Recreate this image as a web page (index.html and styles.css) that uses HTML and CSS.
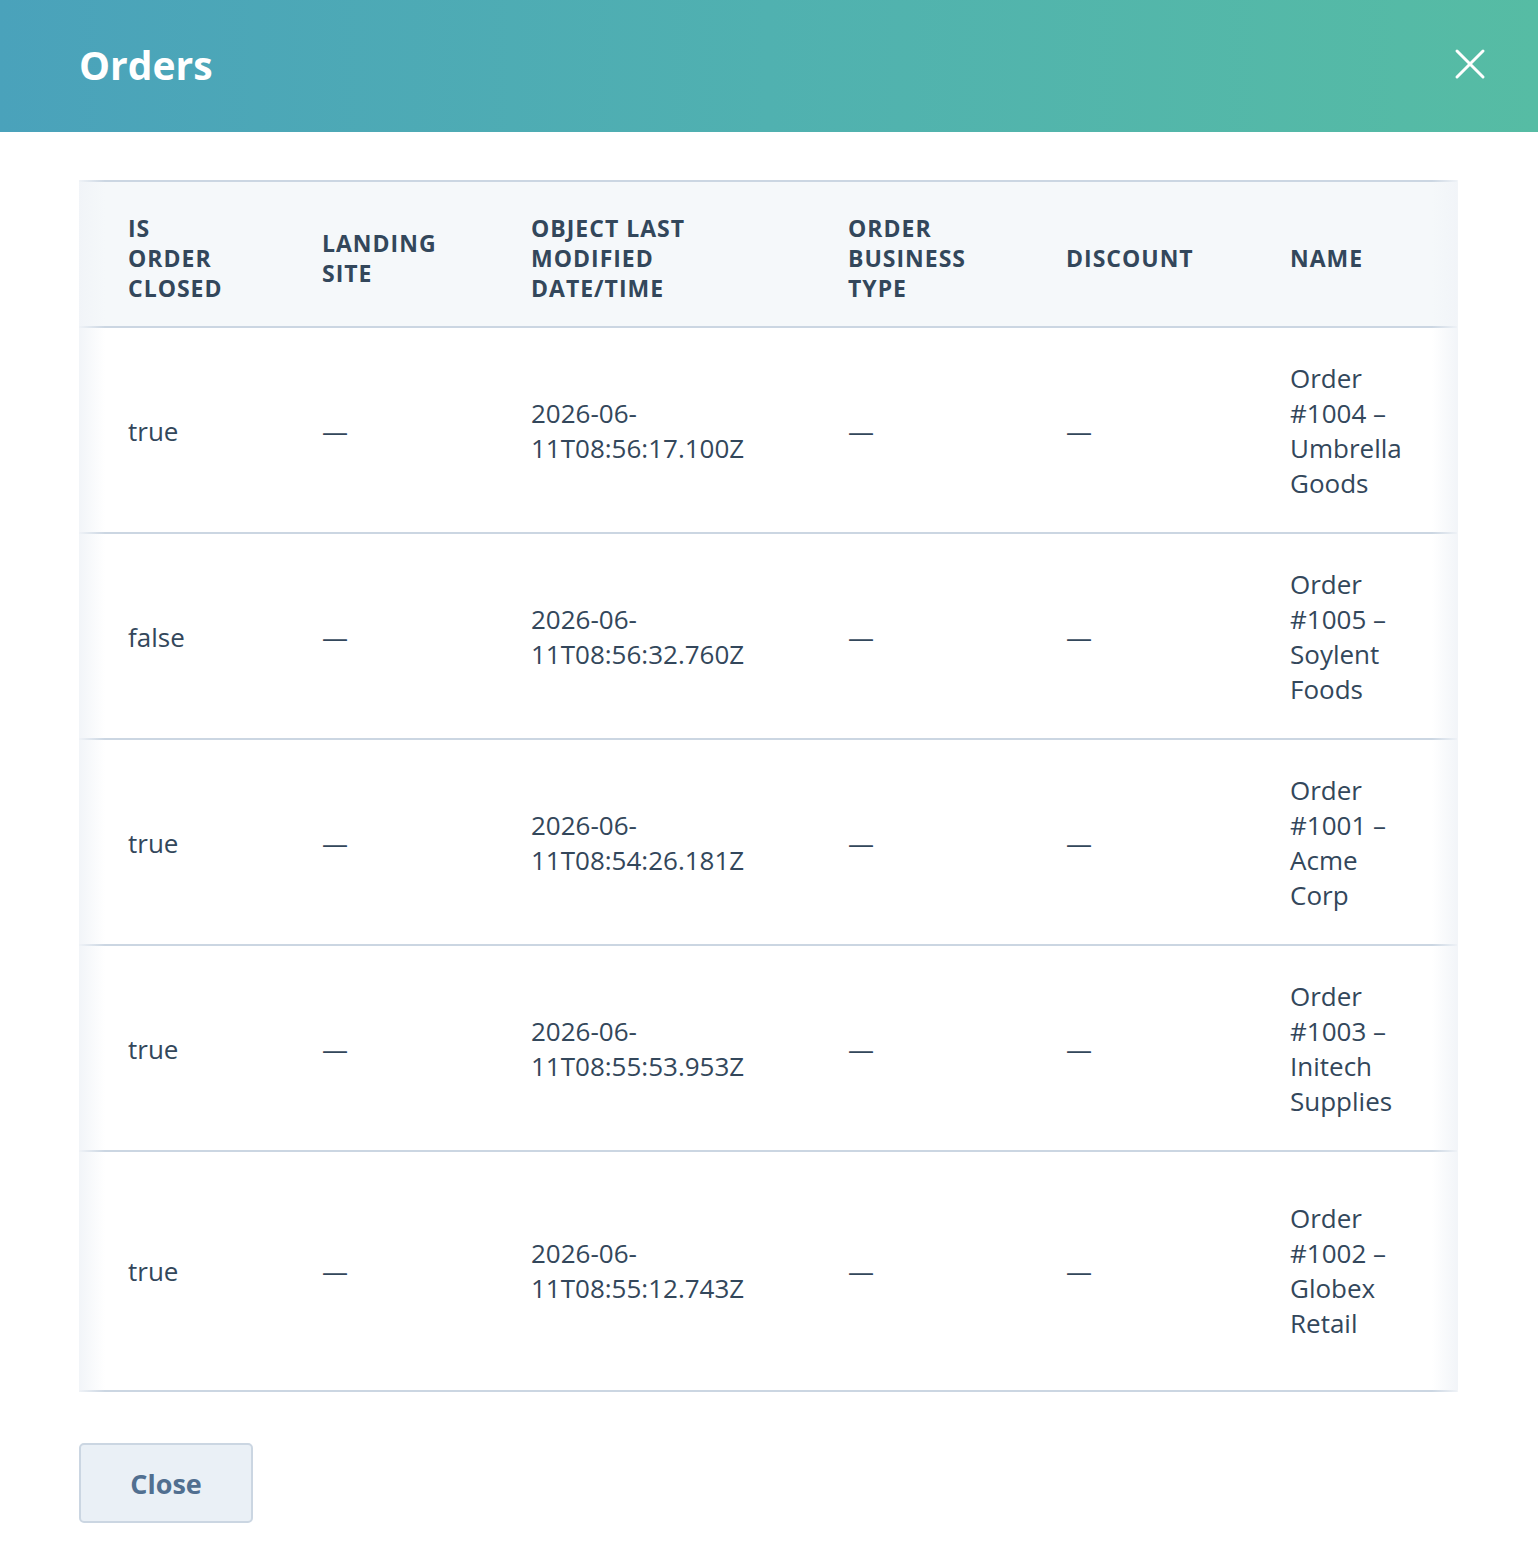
FILE: index.html
```html
<!DOCTYPE html>
<html lang="en">
<head>
  <meta charset="UTF-8">
  <meta name="viewport" content="width=device-width, initial-scale=1.0">
  <title>Orders</title>
  <link rel="stylesheet" href="styles.css">
</head>
<body>
  <div class="modal-header">
    <h1>Orders</h1>
    <button class="close-icon" aria-label="Close">
      <svg width="32" height="32" viewBox="0 0 32 32">
        <line x1="3" y1="3" x2="29" y2="29" />
        <line x1="29" y1="3" x2="3" y2="29" />
      </svg>
    </button>
  </div>

  <div class="modal-body">
    <div class="table-wrap">
      <table class="orders">
        <colgroup>
          <col class="c1"><col class="c2"><col class="c3"><col class="c4"><col class="c5"><col class="c6">
        </colgroup>
        <thead>
          <tr>
            <th>Is order closed</th>
            <th>Landing site</th>
            <th>Object last modified date/time</th>
            <th>Order business type</th>
            <th>Discount</th>
            <th>Name</th>
          </tr>
        </thead>
        <tbody>
          <tr>
            <td>true</td>
            <td>—</td>
            <td>2026-06-<wbr>11T08:56:17.100Z</td>
            <td>—</td>
            <td>—</td>
            <td>Order #1004 – Umbrella Goods</td>
          </tr>
          <tr>
            <td>false</td>
            <td>—</td>
            <td>2026-06-<wbr>11T08:56:32.760Z</td>
            <td>—</td>
            <td>—</td>
            <td>Order #1005 – Soylent Foods</td>
          </tr>
          <tr>
            <td>true</td>
            <td>—</td>
            <td>2026-06-<wbr>11T08:54:26.181Z</td>
            <td>—</td>
            <td>—</td>
            <td>Order #1001 – Acme Corp</td>
          </tr>
          <tr>
            <td>true</td>
            <td>—</td>
            <td>2026-06-<wbr>11T08:55:53.953Z</td>
            <td>—</td>
            <td>—</td>
            <td>Order #1003 – Initech Supplies</td>
          </tr>
          <tr>
            <td>true</td>
            <td>—</td>
            <td>2026-06-<wbr>11T08:55:12.743Z</td>
            <td>—</td>
            <td>—</td>
            <td>Order #1002 – Globex Retail</td>
          </tr>
        </tbody>
      </table>
      <div class="scroll-shadow left"></div>
      <div class="scroll-shadow right"></div>
    </div>

    <button class="close-btn">Close</button>
  </div>
</body>
</html>
```

FILE: styles.css
```css
body {
  margin: 0;
  padding: 0;
  background: #fff;
  color: #33475b;
  font-family: 'Open Sans', 'Liberation Sans', sans-serif;
}
.modal-header {
  display: flex;
  justify-content: space-between;
  align-items: center;
  height: 132px;
  padding: 0 52px 0 79px;
  background: linear-gradient(90deg, #4aa2bb 0%, #50b1b0 50%, #56bca4 100%);
}
.modal-header h1 {
  margin: 0 0 4px 0;
  color: #fff;
  font-size: 39px;
  font-weight: 700;
}
.close-icon {
  background: none;
  border: none;
  padding: 0;
  width: 32px;
  height: 32px;
  margin-bottom: 4px;
  cursor: pointer;
}
.close-icon svg {
  display: block;
}
.close-icon line {
  stroke: #fff;
  stroke-width: 3;
  stroke-linecap: round;
}
.modal-body {
  padding: 48px 80px 43px 79px;
}
.table-wrap {
  position: relative;
}
.orders {
  width: 1378px;
  table-layout: fixed;
  border-collapse: separate;
  border-spacing: 0;
}
.orders col.c1 { width: 219px; }
.orders col.c2 { width: 209px; }
.orders col.c3 { width: 317px; }
.orders col.c4 { width: 218px; }
.orders col.c5 { width: 224px; }
.orders col.c6 { width: 191px; }
.orders th,
.orders td {
  text-align: left;
  vertical-align: middle;
  padding-left: 24px;
  border-bottom: 2px solid #cbd6e2;
}
.orders th:nth-child(1), .orders td:nth-child(1) { padding-left: 49px; padding-right: 66px; }
.orders th:nth-child(2), .orders td:nth-child(2) { padding-right: 45px; }
.orders th:nth-child(3), .orders td:nth-child(3) { padding-right: 53px; }
.orders th:nth-child(4), .orders td:nth-child(4) { padding-right: 44px; }
.orders th:nth-child(5), .orders td:nth-child(5) { padding-right: 50px; }
.orders th:nth-child(6), .orders td:nth-child(6) { padding-right: 45px; }
.orders th {
  background: #f5f8fa;
  border-top: 2px solid #cbd6e2;
  padding-top: 31px;
  padding-bottom: 23px;
  font-size: 23px;
  line-height: 30px;
  font-weight: 700;
  text-transform: uppercase;
  letter-spacing: 1px;
}
.orders td {
  padding-top: 33px;
  padding-bottom: 31px;
  font-size: 26px;
  line-height: 35px;
}
.orders tbody tr:last-child td {
  padding-top: 49px;
  padding-bottom: 49px;
}
.scroll-shadow {
  position: absolute;
  top: 0;
  bottom: 0;
  width: 26px;
  pointer-events: none;
}
.scroll-shadow.left {
  left: 0;
  background: linear-gradient(90deg, rgba(241, 244, 248, 0.95), rgba(245, 248, 250, 0));
}
.scroll-shadow.right {
  right: 0;
  background: linear-gradient(270deg, rgba(241, 244, 248, 0.95), rgba(245, 248, 250, 0));
}
.close-btn {
  margin-top: 51px;
  width: 174px;
  height: 80px;
  background: #eaf0f6;
  border: 2px solid #cbd6e2;
  border-radius: 5px;
  color: #516f90;
  font-family: 'Open Sans', 'Liberation Sans', sans-serif;
  font-size: 27px;
  font-weight: 700;
  cursor: pointer;
}
```
